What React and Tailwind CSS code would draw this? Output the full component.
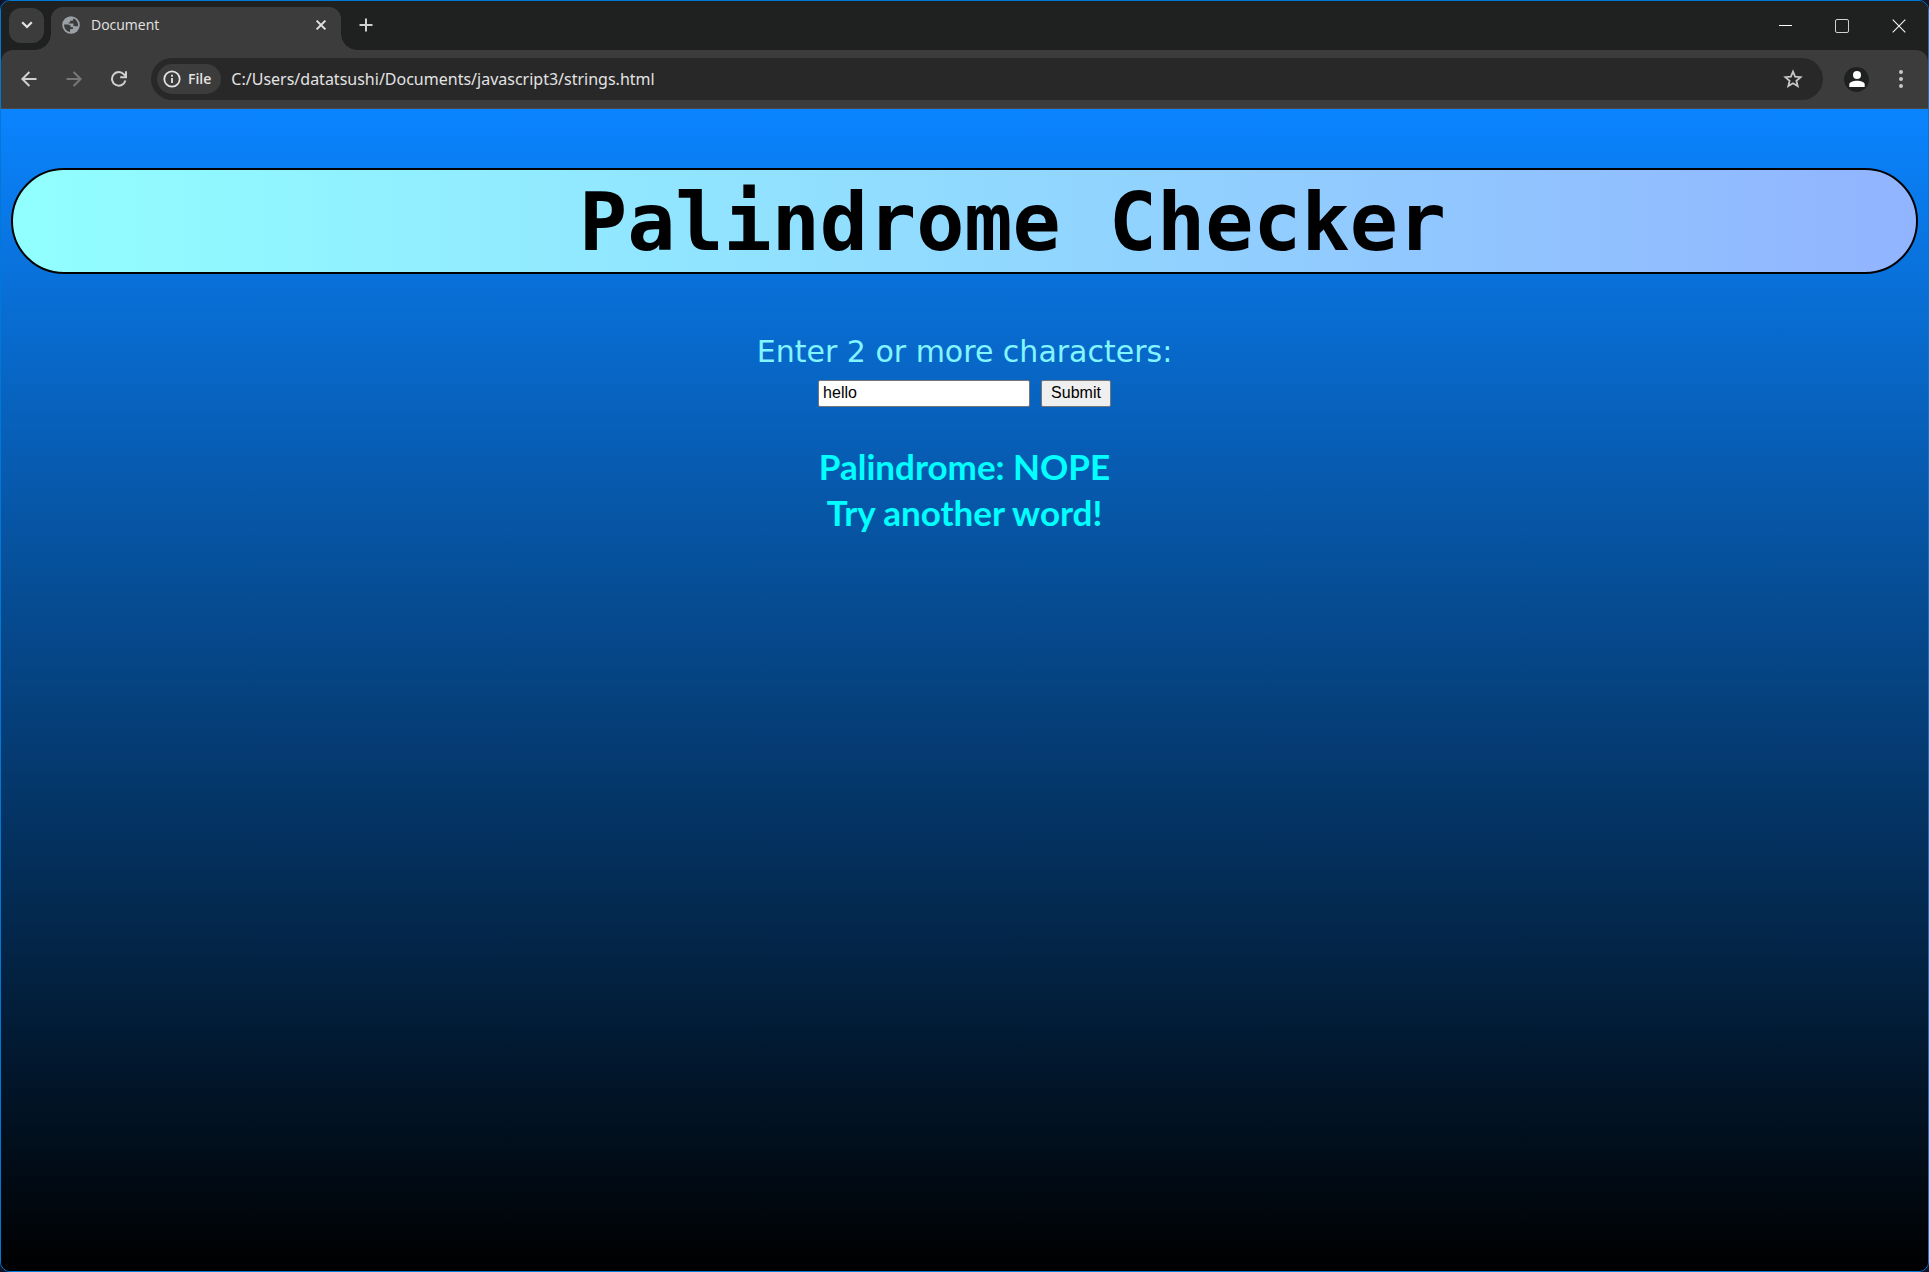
import { useState } from "react";

const chromeFont = "font-['Open_Sans','Noto_Sans',sans-serif]";

function GlobeIcon() {
  return (
    <svg viewBox="0 0 18 18" className="size-[18px]" aria-hidden="true">
      <circle cx="9" cy="9" r="8.8" fill="#9aa0a6" />
      <path
        d="M2 8.6 L5.4 8.6 Q8.8 8.6 8.8 11.2 L11 11.2 L11 13 L8 13.2 L8 16 A7.1 7.1 0 0 1 2 8.6 Z"
        fill="#3c3c3c"
      />
      <path
        d="M11.3 2.3 L11.3 3.4 Q11.3 4.8 9.8 4.8 L8 4.8 L8 6.6 L6.6 6.6 L6.6 7.6 L11.4 7.6 L11.4 9.4 Q11.4 10.2 12.6 10.2 L16 10.2 A7.1 7.1 0 0 0 11.3 2.3 Z"
        fill="#3c3c3c"
      />
    </svg>
  );
}

function TabStrip() {
  return (
    <div className="flex h-[49px] bg-[#1f2120] pl-2">
      <button aria-label="Search tabs" className="mt-[7px] flex size-[35px] items-center justify-center rounded-xl bg-[#3c3c3c] pb-[2px]">
        <svg viewBox="0 0 12 8" className="h-2 w-3" fill="none" stroke="#e3e3e3" strokeWidth="2.2" aria-hidden="true">
          <path d="M1.2 1.2 6 6 10.8 1.2" />
        </svg>
      </button>
      <div className="flex w-[7px] flex-col items-end justify-end">
        <div className="size-4 shrink-0 bg-[radial-gradient(circle_at_0_0,transparent_15.5px,#3c3c3c_16px)]" />
      </div>
      <div className="mt-[6px] flex w-[290px] items-center rounded-t-xl bg-[#3c3c3c] pr-3 pb-[7px] pl-[11px]">
        <GlobeIcon />
        <span className="ml-[11px] flex-1 text-sm text-[#e3e3e3]">Document</span>
        <button aria-label="Close tab" className="flex size-4 items-center justify-center">
          <svg viewBox="0 0 12 12" className="size-3" stroke="#e3e3e3" strokeWidth="2" aria-hidden="true">
            <path d="M1.6 1.6 10.4 10.4M10.4 1.6 1.6 10.4" />
          </svg>
        </button>
      </div>
      <div className="flex w-4 flex-col justify-end">
        <div className="size-4 bg-[radial-gradient(circle_at_100%_0,#1f2120_15.5px,#3c3c3c_16px)]" />
      </div>
      <button aria-label="New tab" className="mt-2 flex h-8 w-[18px] items-center justify-center">
        <svg viewBox="0 0 14 14" className="size-[14px]" stroke="#d0d0d0" strokeWidth="2" aria-hidden="true">
          <path d="M7 0.5V13.5M0.5 7H13.5" />
        </svg>
      </button>
      <div className="ml-auto flex items-center pr-px">
        <button aria-label="Minimize" className="flex h-full w-[57px] items-center justify-center">
          <span className="h-px w-[13px] bg-white" />
        </button>
        <button aria-label="Maximize" className="flex h-full w-14 items-center justify-center">
          <span className="size-[14px] rounded-xs border border-[#d0d0d0]" />
        </button>
        <button aria-label="Close window" className="flex h-full w-[57px] items-center justify-center">
          <svg viewBox="0 0 14 14" className="size-[14px]" stroke="#f5f5f5" strokeWidth="1.1" aria-hidden="true">
            <path d="M.7.7 13.3 13.3M13.3.7.7 13.3" />
          </svg>
        </button>
      </div>
    </div>
  );
}

function Toolbar() {
  return (
    <div className="bg-[#1f2120]">
      <div className="flex h-[59px] items-center rounded-t-xl border-b border-[#4c4945] bg-[#3c3c3c] pr-[19px] pl-5">
        <button aria-label="Back">
          <svg viewBox="0 0 16 16" className="size-4" fill="none" stroke="#d0d0d0" strokeWidth="2" aria-hidden="true">
            <path d="M15.5 8H1.6M8.4 1 1.4 8l7 7" />
          </svg>
        </button>
        <button aria-label="Forward" className="ml-[29px]">
          <svg viewBox="0 0 16 16" className="size-4" fill="none" stroke="#777777" strokeWidth="2" aria-hidden="true">
            <path d="M.5 8h13.9M7.6 1l7 7-7 7" />
          </svg>
        </button>
        <button aria-label="Reload" className="ml-[29px]">
          <svg viewBox="0 0 16 16" className="size-4" fill="none" stroke="#d0d0d0" strokeWidth="2" aria-hidden="true">
            <path d="M14.4 9.6A6.8 6.8 0 1 1 12.9 3.3L14.9 5.4" />
            <path d="M15 0.3V6.2H9.2" />
          </svg>
        </button>
        <div className="ml-6 flex h-[42px] flex-1 items-center rounded-full bg-[#282828] pr-5 pl-[6px]">
          <button className="flex h-[30px] items-center gap-[7px] rounded-full bg-[#3c3c3c] pr-[10px] pl-[6px] text-sm font-semibold text-[#e3e3e3]">
            <svg viewBox="0 0 18 18" className="size-[18px]" fill="none" stroke="#e3e3e3" strokeWidth="1.8" aria-hidden="true">
              <circle cx="9" cy="9" r="7.7" />
              <path d="M9 8v5M9 4.8v1.9" />
            </svg>
            File
          </button>
          <input
            aria-label="Address"
            className="ml-[10px] min-w-0 flex-1 bg-transparent font-['Noto_Sans',sans-serif] text-base text-[#e3e3e3] outline-none"
            defaultValue="C:/Users/datatsushi/Documents/javascript3/strings.html"
          />
          <button aria-label="Bookmark this tab">
            <svg viewBox="0 0 20 20" className="size-5" fill="none" stroke="#c7c7c7" strokeWidth="1.8" aria-hidden="true">
              <path d="M10 2.6 12.1 7.6 17.6 8.1 13.4 11.7 14.7 17.1 10 14.2 5.3 17.1 6.6 11.7 2.4 8.1 7.9 7.6Z" />
            </svg>
          </button>
        </div>
        <button aria-label="Profile" className="ml-[21px] flex size-[25px] items-center justify-center rounded-full bg-[#1f2120]">
          <svg viewBox="0 0 16 16" className="size-4" fill="#ffffff" aria-hidden="true">
            <circle cx="8" cy="4" r="4" />
            <path d="M0.3 16v-2.6C.3 11 4.4 9.7 8 9.7s7.7 1.3 7.7 3.7V16Z" />
          </svg>
        </button>
        <button aria-label="Menu" className="ml-[24px] flex w-4 flex-col items-center gap-[3px]">
          <span className="size-1 rounded-full bg-[#c7c7c7]" />
          <span className="size-1 rounded-full bg-[#c7c7c7]" />
          <span className="size-1 rounded-full bg-[#c7c7c7]" />
        </button>
      </div>
    </div>
  );
}

function PalindromePage() {
  const [word, setWord] = useState("hello");
  const [checked, setChecked] = useState("hello");
  const isPalindrome = checked === checked.split("").reverse().join("");

  return (
    <main className="flex flex-1 flex-col bg-linear-to-b/srgb from-[#0a84ff] to-black px-[10px] pt-[59px] text-center">
      <h1 className="rounded-full border-2 border-black bg-linear-to-r/srgb from-[#91ffff] to-[#91b4ff] pt-1 pl-24 font-['DejaVu_Sans_Mono',monospace] text-[80px] leading-[98px] font-bold text-black">
        Palindrome Checker
      </h1>
      <form
        className="mt-[58px] flex flex-col items-center"
        onSubmit={(e) => {
          e.preventDefault();
          setChecked(word);
        }}
      >
        <label htmlFor="word" className="font-['DejaVu_Sans',sans-serif] text-[30px] leading-10 text-[#82f5ff]">
          Enter 2 or more characters:
        </label>
        <div className="mt-2 flex gap-[11px] font-['Liberation_Sans',Arial,sans-serif] text-base text-black">
          <input
            id="word"
            value={word}
            onChange={(e) => setWord(e.target.value)}
            className="h-[27px] w-[212px] rounded-xs border-1 border-[#767676] bg-white px-1 pb-[2px] outline-none"
          />
          <button type="submit" className="h-[27px] rounded-xs border-1 border-[#767676] bg-[#efefef] px-[9px] pb-[2px] leading-6">
            Submit
          </button>
        </div>
      </form>
      <p className="mt-9 font-['Lato',sans-serif] text-[35px] leading-[46px] font-bold text-[#00ffff]">
        Palindrome: {isPalindrome ? "YEP" : "NOPE"}
        <br />
        Try another word!
      </p>
    </main>
  );
}

export default function App() {
  return (
    <div className="bg-[#10142a]">
      <div className={`flex min-h-screen flex-col overflow-hidden rounded-[10px] border border-[#0078d7] ${chromeFont}`}>
        <TabStrip />
        <Toolbar />
        <PalindromePage />
      </div>
    </div>
  );
}
